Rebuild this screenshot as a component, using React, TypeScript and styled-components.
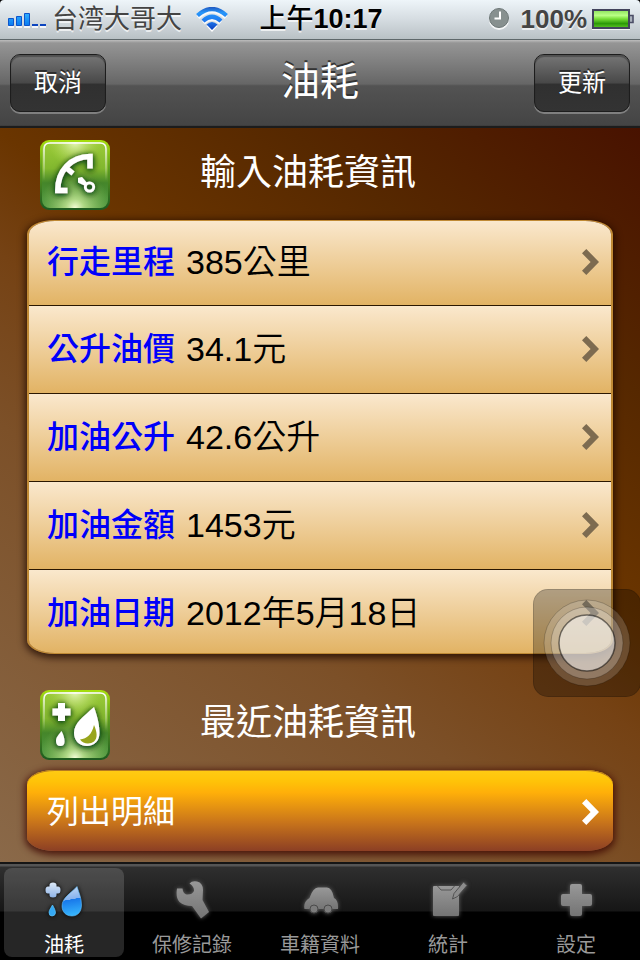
import React from 'react';
import styled, { createGlobalStyle } from 'styled-components';

const GlobalStyle = createGlobalStyle`
  * { box-sizing: border-box; }
  body { margin: 0; background: #000; }
  body, button {
    font-family: "Liberation Sans", "Noto Sans CJK TC", sans-serif;
  }
  button { border: 0; padding: 0; background: none; cursor: pointer; }
  svg { display: block; }
`;

const Screen = styled.div`
  position: relative;
  display: flex;
  flex-direction: column;
  min-height: 100vh;
  overflow: hidden;
`;

/* ---------- status bar ---------- */

const StatusBar = styled.div`
  display: grid;
  grid-template-columns: 1fr auto 1fr;
  align-items: center;
  height: 40px;
  padding: 0 6px 1px 8px;
  background: linear-gradient(#eef5f9, #d5dce1 50%, #b9c1c5);
  border-bottom: 1px solid #5f686b;
  border-radius: 4px 4px 0 0;
  color: #444;
  font-size: 26px;
  line-height: 36px;
  white-space: nowrap;
  text-shadow: 0 2px 0 rgba(255, 255, 255, 0.7);
`;

const StatusGroup = styled.div<{ $end?: boolean }>`
  display: flex;
  align-items: center;
  justify-content: ${(p) => (p.$end ? 'flex-end' : 'flex-start')};
`;

const Carrier = styled.span`
  margin: 0 14px 0 6px;
  font-family: "Liberation Sans", "Noto Sans CJK SC", sans-serif;
  font-weight: 400;
`;

const Clock = styled.time`
  color: #000;
  font-size: 27px;
  font-weight: 700;
`;

const DayHalf = styled.span`
  font-weight: 500;
`;

const Percent = styled.span`
  margin: 0 5px 0 12px;
  font-weight: 700;
`;

/* ---------- navigation bar ---------- */

const NavBar = styled.header`
  display: grid;
  grid-template-columns: 1fr auto 1fr;
  align-items: center;
  height: 88px;
  padding: 0 10px 2px;
  background: linear-gradient(#bdbdbd 0, #959595 3px, #666 50%, #535353 52%, #444 97%, #1c1c1c 98%);
`;

const NavTitle = styled.h1`
  margin: 0;
  padding-bottom: 2px;
  color: #fff;
  font-size: 39px;
  font-weight: 400;
  line-height: 48px;
  text-shadow: 0 -2px 0 #333;
`;

const NavButton = styled.button<{ $end?: boolean }>`
  justify-self: ${(p) => (p.$end ? 'end' : 'start')};
  width: 96px;
  height: 58px;
  border: 1px solid #1d1d1d;
  border-radius: 10px;
  background: linear-gradient(#767676, #484848 50%, #303030 52%, #333);
  box-shadow: inset 0 2px 1px rgba(0, 0, 0, 0.3), 0 2px 0 rgba(255, 255, 255, 0.3);
  color: #fff;
  font-size: 24px;
  font-weight: 400;
  line-height: 32px;
  text-shadow: 0 -2px 0 #2c2c2c;
`;

/* ---------- content ---------- */

const Content = styled.main`
  flex: 1;
  padding: 12px 27px 11px;
  background: linear-gradient(
    217deg,
    #481200 0%,
    #562800 22%,
    #6a3500 40%,
    #754214 50%,
    #7c5028 64%,
    #8a6949 100%
  );
`;

const SectionHeader = styled.div<{ $spaced?: boolean }>`
  display: grid;
  grid-template-columns: 1fr auto 1fr;
  align-items: center;
  padding: 0 37px 0 13px;
  margin: ${(p) => (p.$spaced ? '36px' : '0')} 0 10px;
`;

const SectionTitle = styled.h2`
  margin: 0;
  padding-bottom: 4px;
  color: #fff;
  font-size: 36px;
  font-weight: 400;
  line-height: 48px;
`;

const List = styled.ul`
  margin: 0;
  padding: 0;
  list-style: none;
  overflow: hidden;
  border: solid #c08a35;
  border-width: 1px 2px;
  border-radius: 28px / 14px;
  box-shadow: 0 2px 7px 2px rgba(30, 8, 0, 0.75);
`;

const ListItem = styled.li`
  & + & { border-top: 1px solid #2b1700; }
`;

const ListRow = styled.button<{ $height: number }>`
  display: flex;
  align-items: center;
  width: 100%;
  height: ${(p) => p.$height}px;
  padding: 0 12px 2px 18px;
  background: linear-gradient(#fae8cd, #e2b364);
  color: #000;
  font-size: 34px;
  font-weight: 350;
  line-height: 44px;
  text-align: left;

  ${ListItem}:last-child & { padding-top: 2px; padding-bottom: 0; }
`;

const RowLabel = styled.span`
  margin-right: 11px;
  color: #0000fa;
  font-size: 32px;
  font-weight: 500;
`;

const RowValue = styled.span`
  flex: 1;
`;

const DetailButton = styled.button`
  display: flex;
  align-items: center;
  justify-content: space-between;
  width: 100%;
  height: 81px;
  padding: 2px 14px 0 20px;
  border-radius: 28px / 14px;
  background: linear-gradient(#ffcb14, #ffc308 14%, #ffaf09 28%, #c8741b 65%, #8c3f24);
  box-shadow: inset 0 1px 0 #b67a20, 0 2px 7px 2px rgba(60, 5, 0, 0.8);
  color: #fff;
  font-size: 32px;
  line-height: 44px;
`;

/* ---------- floating touch button ---------- */

const TouchPad = styled.button`
  position: absolute;
  top: 589px;
  right: -1px;
  display: grid;
  place-items: center;
  width: 108px;
  height: 108px;
  border: 1px solid rgba(0, 0, 0, 0.15);
  border-radius: 15px;
  background: rgba(0, 0, 0, 0.28);
`;

/* ---------- tab bar ---------- */

const TabBar = styled.nav`
  display: grid;
  grid-template-columns: repeat(5, 1fr);
  height: 98px;
  padding: 4px 0;
  border-top: 2px solid #151515;
  background: linear-gradient(#555 0, #555 2px, #2f2f2f 3px, #161616 47px, #000 48px);
`;

const Tab = styled.button<{ $active?: boolean }>`
  display: flex;
  flex-direction: column;
  align-items: center;
  margin: 0 4px;
  padding-top: 10px;
  border-radius: 8px;
  background: ${(p) => (p.$active ? 'rgba(255, 255, 255, 0.15)' : 'none')};
  color: ${(p) => (p.$active ? '#fff' : '#999')};
  font-size: 20px;
  line-height: 24px;
  white-space: nowrap;
`;

const TabIcon = styled.svg<{ $active?: boolean }>`
  width: 44px;
  height: 44px;
  margin-bottom: 11px;
  filter: drop-shadow(0 0 2px ${(p) => (p.$active ? '#000' : '#666')});
`;

/* ---------- drawings ---------- */

const SignalIcon = () => (
  <svg width="38" height="18" viewBox="0 0 38 18" aria-hidden="true">
    <defs>
      <linearGradient id="signal" x1="0" x2="0" y1="0" y2="1">
        <stop offset="0" stopColor="#2fb0ff" />
        <stop offset="1" stopColor="#0a7af0" />
      </linearGradient>
    </defs>
    <g fill="#fff" opacity="0.8">
      <path d="M0 16h6v2H0zM8 16h6v2H8zM16 16h6v2h-6zM24 16h6v2h-6zM32 16h6v2h-6z" />
    </g>
    <g fill="url(#signal)" stroke="#0d55cc">
      <path d="M.5 8.500h5v7h-5zM8.500 6.500h5v9h-5zM16.500 3.500h5v12h-5z" />
    </g>
    <path fill="#0d45bf" d="M24 14h6v2h-6zM32 14h6v2h-6z" />
  </svg>
);

const WifiIcon = () => (
  <svg width="32" height="25" viewBox="0 0 32 25" aria-hidden="true">
    <defs>
      <linearGradient id="wifi" gradientUnits="userSpaceOnUse" x1="0" x2="0" y1="0" y2="23">
        <stop offset="0" stopColor="#2059c0" />
        <stop offset="0.25" stopColor="#2796fa" />
        <stop offset="0.6" stopColor="#1e7af0" />
        <stop offset="1" stopColor="#0c3fbe" />
      </linearGradient>
    </defs>
    <g transform="translate(0 2)" fill="none" stroke="#fff" strokeWidth="4" opacity="0.8">
      <path d="M2 8.500Q16-4 30 8.500M7.500 14Q16 6 24.500 14" />
    </g>
    <g fill="none" stroke="url(#wifi)" strokeWidth="4.200">
      <path d="M1.500 8.500Q16-4.500 30.500 8.500M7 14Q16 5.500 25 14" />
    </g>
    <path fill="#fff" d="M10.500 19Q16 14 21.500 19L16 25z" />
    <path fill="url(#wifi)" d="M10.500 17.500Q16 12.500 21.500 17.500L16 23z" />
  </svg>
);

const AlarmIcon = () => (
  <svg width="20" height="22" viewBox="0 0 20 22" aria-hidden="true">
    <circle cx="10" cy="12" r="10" fill="#fff" opacity="0.8" />
    <circle cx="10" cy="10" r="9.500" fill="#87908f" stroke="#6d7777" />
    <path d="M11 3.500V10.500H5.500" fill="none" stroke="#fff" strokeWidth="2" />
  </svg>
);

const BatteryIcon = () => (
  <svg width="42" height="22" viewBox="0 0 42 22" aria-hidden="true">
    <defs>
      <linearGradient id="battery" x1="0" x2="0" y1="0" y2="1">
        <stop offset="0" stopColor="#8ae05a" />
        <stop offset="0.3" stopColor="#baff86" />
        <stop offset="0.5" stopColor="#76dd35" />
        <stop offset="0.75" stopColor="#2c9908" />
        <stop offset="1" stopColor="#5cc723" />
      </linearGradient>
    </defs>
    <path fill="#fff" opacity="0.8" d="M0 19h38v3H0z" />
    <rect x="1" y="2" width="36" height="18" fill="url(#battery)" stroke="#42435c" strokeWidth="2" />
    <path d="M38 7.500h3v7h-3" fill="#a9b0bb" stroke="#4b4d66" strokeWidth="1.600" />
  </svg>
);

const Chevron = ({ color }: { color: string }) => (
  <svg width="17" height="26" viewBox="0 0 17 26" aria-hidden="true">
    <path fill={color} d="M0 4.300L4.300 0 17 13 4.300 26 0 21.700 8.600 13z" />
  </svg>
);

const BigDrop = 'M54 17C58 28 59.500 36 59.500 43C59.500 51 54 56 47 56C39 56 34 50 34 43C34 33 43 27 54 17Z';

const GreenTile = ({ id, children }: { id: string; children: React.ReactNode }) => (
  <svg width="70" height="70" viewBox="0 0 70 70" aria-hidden="true">
    <defs>
      <linearGradient id={`${id}-base`} x1="0" x2="0" y1="0" y2="1">
        <stop offset="0" stopColor="#9ccb39" />
        <stop offset="0.4" stopColor="#82b82e" />
        <stop offset="0.62" stopColor="#45862a" />
        <stop offset="0.85" stopColor="#4c923b" />
        <stop offset="1" stopColor="#4e9440" />
      </linearGradient>
      <radialGradient id={`${id}-glow`} cx="0.5" cy="1" r="0.55">
        <stop offset="0" stopColor="#f4ffd8" />
        <stop offset="0.25" stopColor="#bfe491" stopOpacity="0.85" />
        <stop offset="1" stopColor="#8fc656" stopOpacity="0" />
      </radialGradient>
      <radialGradient id={`${id}-top`} cx="0.5" cy="0" r="0.4">
        <stop offset="0" stopColor="#f0fbc8" stopOpacity="0.9" />
        <stop offset="1" stopColor="#b2db50" stopOpacity="0" />
      </radialGradient>
      <linearGradient id={`${id}-rim`} x1="0" x2="0" y1="0" y2="1">
        <stop offset="0" stopColor="#fff" />
        <stop offset="0.4" stopColor="#fff" stopOpacity="0.5" />
        <stop offset="0.8" stopColor="#fff" stopOpacity="0" />
      </linearGradient>
      <linearGradient id={`${id}-edge`} x1="0" x2="0" y1="0" y2="1">
        <stop offset="0" stopColor="#a7e00c" />
        <stop offset="0.4" stopColor="#5f9d21" />
        <stop offset="1" stopColor="#1d5a20" />
      </linearGradient>
      <filter id={`${id}-shade`} x="-0.4" y="-0.4" width="1.8" height="1.8">
        <feDropShadow dx="0" dy="1" stdDeviation="2.500" floodColor="#0a3d12" floodOpacity="1" />
        <feDropShadow dx="0" dy="1" stdDeviation="3" floodColor="#0a3d12" floodOpacity="0.6" />
      </filter>
    </defs>
    <rect width="70" height="70" rx="9" fill={`url(#${id}-edge)`} />
    <rect x="2" y="2" width="66" height="66" rx="8" fill={`url(#${id}-base)`} />
    <rect x="2" y="2" width="66" height="66" rx="8" fill={`url(#${id}-glow)`} />
    <rect x="2" y="2" width="66" height="66" rx="8" fill={`url(#${id}-top)`} />
    <path d="M4 50V9Q4 3 10 3H60Q66 3 66 9V50" fill="none" stroke={`url(#${id}-rim)`} strokeWidth="1.600" />
    <g filter={`url(#${id}-shade)`}>{children}</g>
  </svg>
);

const GaugeTile = () => (
  <GreenTile id="gauge">
    <path
      d="M27.500 50.500H17.800C17.500 31 31 16.500 50 16.500V28.500"
      fill="none"
      stroke="#fff"
      strokeWidth="5.500"
    />
    <path d="M24.500 26.500L33 33.500" stroke="#fff" strokeWidth="5" />
    <circle cx="49.500" cy="47" r="4.200" fill="none" stroke="#fff" strokeWidth="2.800" />
    <path d="M38 38L42 37 47.500 43.500 45.500 46 38 42.500Z" fill="#fff" />
  </GreenTile>
);

const FuelTile = () => (
  <GreenTile id="fuel">
    <path fill="#fff" d="M18 13h7v5.500h5.500v7H25v5.500h-7v-5.500h-5.500v-7H18z" />
    <path fill="#fff" d="M21.500 41C23.500 45 24.500 48 24.500 51.500C24.500 54.500 23 56 20.500 56C17.500 56 16 54 16 51C16 47.500 18.500 45 21.500 41Z" />
    <path fill="#fff" d={BigDrop} />
    <path fill="#98a51c" d="M54 35C57 42 58 48 54 51.500C50 54.500 43 54 40 49.500C47 49 52 44 54 35Z" />
  </GreenTile>
);

const FuelIcon = () => (
  <TabIcon viewBox="0 0 44 44" $active aria-hidden="true">
    <defs>
      <linearGradient id="pale" x1="0" x2="0" y1="0" y2="1">
        <stop offset="0" stopColor="#dce8f7" />
        <stop offset="1" stopColor="#8fb4e8" />
      </linearGradient>
      <linearGradient id="water" x1="0" x2="0.12" y1="0" y2="1">
        <stop offset="0" stopColor="#c8dcf5" />
        <stop offset="0.48" stopColor="#86b2ee" />
        <stop offset="0.49" stopColor="#1878ea" />
        <stop offset="1" stopColor="#35b2fc" />
      </linearGradient>
    </defs>
    <path fill="url(#pale)" d="M7.500 7Q7.500 4.500 11 4.500T14.500 7V8.500H16Q18.500 8.500 18.500 12T16 15.500H14.500V17Q14.500 19.500 11 19.500T7.500 17V15.500H6Q3.500 15.500 3.500 12T6 8.500H7.500Z" />
    <path fill="#35a9f4" stroke="#5ec7ff" strokeWidth="0.700" d="M10.500 27C12 30 13.500 32 13.500 35Q13 38 10 38T7 34.500C7 32 9 30 10.500 27Z" />
    <path fill="url(#water)" stroke="#66c2ff" strokeWidth="0.600" d="M35 8.500C37 15 39.500 20 39.500 27C39.500 34 35.500 38 30 38C24 38 20 34 20 28C20 20 28 16 35 8.500Z" />
  </TabIcon>
);

const GreyFill = ({ id }: { id: string }) => (
  <linearGradient id={id} x1="0" x2="0" y1="0" y2="1">
    <stop offset="0" stopColor="#989898" />
    <stop offset="1" stopColor="#747474" />
  </linearGradient>
);

const WrenchIcon = () => (
  <TabIcon viewBox="0 0 44 44" aria-hidden="true">
    <GreyFill id="grey-wrench" />
    <path
      fill="url(#grey-wrench)"
      d="M19.500 5.500Q22 2.500 27 3.500Q33 5 33 12L32.500 22 39 34 31 40.500 22 28Q14 28 9.500 24Q5.500 20 7 10.500L12.500 10.500Q13 15.500 16.500 16.500Q22 17 24 13Q24.500 9 19.500 5.500Z"
    />
  </TabIcon>
);

const CarIcon = () => (
  <TabIcon viewBox="0 0 44 44" aria-hidden="true">
    <GreyFill id="grey-car" />
    <path
      fill="url(#grey-car)"
      d="M6.500 31Q5 24 11.500 20Q15 9.500 20 9.500H29Q34 9.500 36 20Q40.500 22 40 31Z"
    />
    <g fill="#7c7c7c" stroke="#4a4a4a">
      <circle cx="16" cy="31" r="4" />
      <circle cx="30" cy="31" r="4" />
    </g>
  </TabIcon>
);

const ClipboardIcon = () => (
  <TabIcon viewBox="0 0 44 44" aria-hidden="true">
    <GreyFill id="grey-board" />
    <path fill="url(#grey-board)" d="M8 8H33V37Q33 38 32 38H8Q7 38 7 37V9Q7 8 8 8Z" />
    <path d="M11.500 8L15 12H25L28.500 8" fill="none" stroke="#555" />
    <path d="M37.500 4L41 7.500 31.500 18.500 26.500 21 28 15.500Z" fill="#8c8c8c" stroke="#444" strokeWidth="0.800" />
  </TabIcon>
);

const PlusIcon = () => (
  <TabIcon viewBox="0 0 44 44" aria-hidden="true">
    <GreyFill id="grey-plus" />
    <path
      fill="url(#grey-plus)"
      d="M18 6H26Q28 6 28 8V16H36Q38 16 38 18V26Q38 28 36 28H28V36Q28 38 26 38H18Q16 38 16 36V28H9Q7 28 7 26V18Q7 16 9 16H16V8Q16 6 18 6Z"
    />
  </TabIcon>
);

const TouchDial = () => (
  <svg width="88" height="88" viewBox="0 0 88 88" aria-hidden="true">
    <g stroke="#000" strokeOpacity="0.2" fill="#fff">
      <circle cx="44" cy="44" r="43" fillOpacity="0.17" />
      <circle cx="44" cy="44" r="36" fillOpacity="0.24" />
    </g>
    <circle cx="44" cy="44" r="28" fill="#fff" fillOpacity="0.5" stroke="#000" strokeOpacity="0.5" strokeWidth="1.500" />
  </svg>
);

/* ---------- page ---------- */

const rows = [
  { label: '行走里程', value: '385公里', height: 84 },
  { label: '公升油價', value: '34.1元', height: 87 },
  { label: '加油公升', value: '42.6公升', height: 87 },
  { label: '加油金額', value: '1453元', height: 87 },
  { label: '加油日期', value: '2012年5月18日', height: 83 },
];

const tabs = [
  { label: '油耗', Icon: FuelIcon },
  { label: '保修記錄', Icon: WrenchIcon },
  { label: '車籍資料', Icon: CarIcon },
  { label: '統計', Icon: ClipboardIcon },
  { label: '設定', Icon: PlusIcon },
];

export default function App() {
  return (
    <Screen>
      <GlobalStyle />
      <StatusBar>
        <StatusGroup>
          <SignalIcon />
          <Carrier>台湾大哥大</Carrier>
          <WifiIcon />
        </StatusGroup>
        <Clock>
          <DayHalf>上午</DayHalf>10:17
        </Clock>
        <StatusGroup $end>
          <AlarmIcon />
          <Percent>100%</Percent>
          <BatteryIcon />
        </StatusGroup>
      </StatusBar>

      <NavBar>
        <NavButton type="button">取消</NavButton>
        <NavTitle>油耗</NavTitle>
        <NavButton type="button" $end>更新</NavButton>
      </NavBar>

      <Content>
        <SectionHeader>
          <GaugeTile />
          <SectionTitle>輸入油耗資訊</SectionTitle>
        </SectionHeader>
        <List>
          {rows.map((row) => (
            <ListItem key={row.label}>
              <ListRow type="button" $height={row.height}>
                <RowLabel>{row.label}</RowLabel>
                <RowValue>{row.value}</RowValue>
                <Chevron color="#7d6b50" />
              </ListRow>
            </ListItem>
          ))}
        </List>

        <SectionHeader $spaced>
          <FuelTile />
          <SectionTitle>最近油耗資訊</SectionTitle>
        </SectionHeader>
        <DetailButton type="button">
          列出明細
          <Chevron color="#fff" />
        </DetailButton>
      </Content>

      <TabBar>
        {tabs.map(({ label, Icon }, i) => (
          <Tab key={label} type="button" $active={i === 0}>
            <Icon />
            {label}
          </Tab>
        ))}
      </TabBar>

      <TouchPad type="button" aria-label="AssistiveTouch">
        <TouchDial />
      </TouchPad>
    </Screen>
  );
}
